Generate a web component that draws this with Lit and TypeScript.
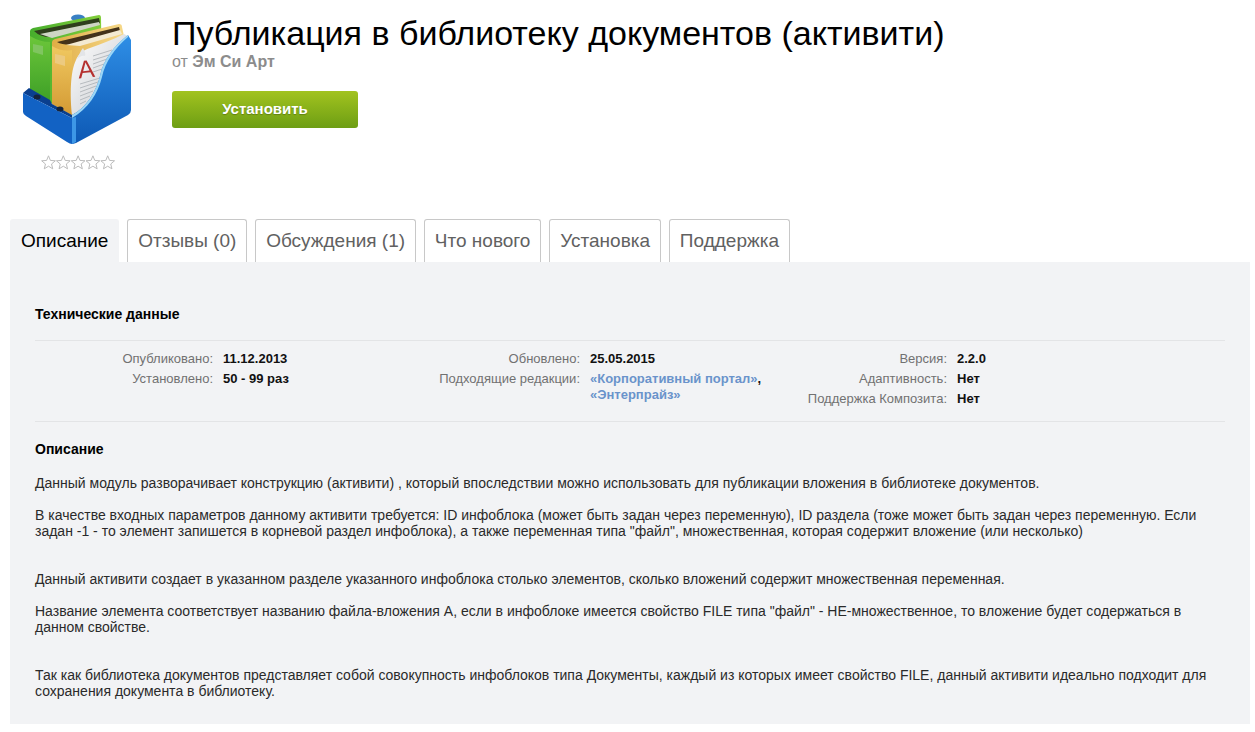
import { LitElement, html, css, svg } from "lit";
import { customElement } from "lit/decorators.js";

const TABS = ["Описание", "Отзывы (0)", "Обсуждения (1)", "Что нового", "Установка", "Поддержка"];

const starPoints = (x: number) => {
  const pts: string[] = [];
  for (let i = 0; i < 10; i++) {
    const r = i % 2 ? 3.2 : 7.2;
    const a = (Math.PI / 5) * i - Math.PI / 2;
    pts.push(`${(x + r * Math.cos(a)).toFixed(2)},${(8 + r * Math.sin(a)).toFixed(2)}`);
  }
  return pts.join(" ");
};

const boxIcon = html`<svg class="logo" width="130" height="150" viewBox="15 5 130 150">
  <defs>
    <linearGradient id="gr" x1="0" y1="0" x2="1" y2="0"><stop offset="0" stop-color="#46ad2c"/><stop offset="1" stop-color="#84cf3c"/></linearGradient>
    <linearGradient id="ye" x1="0" y1="0" x2="1" y2="0"><stop offset="0" stop-color="#e0ad45"/><stop offset="1" stop-color="#f6d98a"/></linearGradient>
    <linearGradient id="pg" x1="0" y1="0" x2="1" y2="1"><stop offset="0" stop-color="#ffffff"/><stop offset="1" stop-color="#c4c7cc"/></linearGradient>
    <linearGradient id="bl" x1="0" y1="0" x2="0" y2="1"><stop offset="0" stop-color="#2f8fe6"/><stop offset="1" stop-color="#0d58b4"/></linearGradient>
    <linearGradient id="sp" x1="0" y1="0" x2="0" y2="1"><stop offset="0" stop-color="#6cc63a"/><stop offset="1" stop-color="#3c9e26"/></linearGradient>
    <linearGradient id="ys" x1="0" y1="0" x2="0" y2="1"><stop offset="0" stop-color="#f0c860"/><stop offset="1" stop-color="#d39a34"/></linearGradient>
  </defs>
  <ellipse cx="78" cy="18" rx="7" ry="3.5" fill="#3a80c4"/>
  <path d="M30 31 Q30 29 33 28 L99 15 Q101 15 101 18 L102 80 L50 104 L30 92 Z" fill="url(#gr)"/>
  <path d="M34 31 L99 18 L100 23 L50 37 Q40 37 34 31 Z" fill="#2f3f1c"/>
  <path d="M40 34 L99 22 L100 25 L52 38 Z" fill="#cfd6c4"/>
  <path d="M30 36 Q40 42 50 42 L50 104 L30 92 Z" fill="url(#sp)"/>
  <path d="M33 44 L43 46 L43 55 L33 52 Z" fill="#80c560"/>
  <path d="M52 42 Q52 40 55 39 L119 24 Q122 24 122 27 L124 36 L124 90 L72 116 L52 104 Z" fill="url(#ye)"/>
  <path d="M57 42 L119 27 L120 31 L78 44 Q64 46 57 42 Z" fill="#43321a"/>
  <path d="M66 45 L120 30 L122 34 L80 46 Z" fill="#f3ead2"/>
  <path d="M52 46 Q62 52 72 50 L72 115 L52 104 Z" fill="url(#ys)"/>
  <path d="M55 54 L65 56 L65 66 L55 63 Z" fill="#ecca80"/>
  <path d="M72 115 C70 96 70 72 76 60 C79 53 84 50 90 48 C101 44 112 40 124 34 L128 36 L128 60 L100 100 Z" fill="url(#pg)"/>
  <path d="M76 60 C79 55 80 52 83 48 C85 52 86 54 85 56 C82 55 79 57 76 60 Z" fill="#e3e5e8"/>
  <text x="78" y="78" class="letter" transform="rotate(-6 84 70)">A</text>
  <g stroke="#a9aeb4" stroke-width="0.8">
    <path d="M93 56 L112 50"/><path d="M93 60 L109 55"/><path d="M93 64 L107 59"/><path d="M93 68 L104 64"/><path d="M93 72 L102 69"/><path d="M80 84 L100 78"/><path d="M80 88 L98 82"/><path d="M80 92 L96 86"/><path d="M80 96 L93 91"/><path d="M80 100 L90 96"/><path d="M80 104 L86 101"/>
  </g>
  <path d="M72 115 C86 108 96 92 100 76 C103 60 114 46 128 35 L131 40 L131 110 Q131 113 128 115 L76 143 Q73 144 72 144 Z" fill="url(#bl)"/>
  <path d="M72 115 C86 108 96 92 100 76 C103 60 114 46 128 35 L128 37 C115 48 105 62 102 77 C98 93 88 109 72 118 Z" fill="#9ad6f6"/>
  <path d="M23 93 L29 88 L50 100 L52 104 L72 115 L72 118 Z" fill="#0a3f8e"/>
  <path d="M23 93 L72 118 L72 144 Q70 144 67 142 L26 116 Q23 114 23 112 Z" fill="#1262c4"/>
  <path d="M72 118 L76 117 L76 142 L72 144 Z" fill="#3d97e6"/>
  <ellipse cx="37" cy="97" rx="3.5" ry="2.5" fill="#15233a"/>
  <ellipse cx="60" cy="109" rx="3.5" ry="2.5" fill="#15233a"/>
</svg>`;

@customElement("app-root")
export class AppRoot extends LitElement {
  static styles = css`
    :host {
      display: block;
      height: 732px;
      background: #fff;
      font-family: "Liberation Sans", Arial, sans-serif;
      overflow: hidden;
    }
    .head {
      display: flex;
      height: 219px;
    }
    .aside {
      width: 172px;
      flex: none;
      padding-top: 5px;
      box-sizing: border-box;
    }
    .logo {
      display: block;
      margin-left: 15px;
      filter: blur(0.35px);
    }
    .letter {
      font: 25px "Liberation Sans", sans-serif;
      fill: #b5302f;
    }
    .stars {
      display: block;
      margin-left: 40px;
    }
    h1 {
      margin: 13px 0 0;
      font-size: 34px;
      font-weight: 400;
      line-height: 40px;
      color: #000;
    }
    .by {
      font-size: 16px;
      line-height: 18px;
      color: #8c8c8c;
    }
    .install {
      width: 186px;
      height: 37px;
      margin-top: 20px;
      border-radius: 3px;
      background: linear-gradient(#a2c31f, #6d9e14);
      color: #fff;
      font-size: 15px;
      font-weight: 700;
      line-height: 35px;
      text-align: center;
      text-shadow: 0 1px 1px rgba(0, 0, 0, 0.25);
    }
    .tabs {
      display: flex;
      gap: 7.8px;
      margin-left: 10px;
      height: 43px;
    }
    .tab {
      box-sizing: border-box;
      height: 43px;
      padding: 10px 10px 0;
      border: 1px solid #c8c8c8;
      border-bottom: 0;
      border-radius: 3px 3px 0 0;
      font-size: 19px;
      line-height: 22px;
      color: #616161;
    }
    .tab.active {
      border-color: #f2f3f5;
      background: #f2f3f5;
      color: #000;
    }
    .panel {
      height: 462px;
      width: 1240px;
      box-sizing: border-box;
      margin-left: 10px;
      padding: 44px 25px 0;
      background: #f2f3f5;
      font-size: 14px;
    }
    h2 {
      margin: 0;
      font-size: 14px;
      line-height: 16px;
      color: #000;
    }
    .specs {
      display: grid;
      grid-template-columns: 367px 367px 1fr;
      height: 82px;
      box-sizing: border-box;
      margin-top: 18px;
      padding-top: 10px;
      border-top: 1px solid #e3e4e6;
      border-bottom: 1px solid #e3e4e6;
      font-size: 13px;
    }
    .col {
      display: grid;
      grid-template-columns: 178px 1fr;
      column-gap: 10px;
      row-gap: 4px;
      align-content: start;
      line-height: 16px;
    }
    .k {
      text-align: right;
      color: #717171;
    }
    .v {
      font-weight: 700;
      color: #111;
    }
    .v a {
      color: #6a93cb;
    }
    .desc {
      margin-top: 19px;
    }
    .body {
      margin-top: 18px;
      line-height: 16px;
      color: #2a2a2a;
    }
  `;

  private spec(k: string, v: unknown) {
    return html`<div class="k">${k}</div><div class="v">${v}</div>`;
  }

  render() {
    return html`
      <div class="head">
        <div class="aside">
          ${boxIcon}
          <svg class="stars" width="76" height="16" viewBox="0 0 76 16">
            ${[8.5, 23.3, 38.1, 52.9, 67.7].map(
              (x) => svg`<polygon points=${starPoints(x)} fill="#fff" stroke="#bcbcbc" stroke-width="1"/>`
            )}
          </svg>
        </div>
        <div>
          <h1>Публикация в библиотеку документов (активити)</h1>
          <div class="by">от <b>Эм Си Арт</b></div>
          <div class="install">Установить</div>
        </div>
      </div>
      <div class="tabs">
        ${TABS.map((t, i) => html`<div class="tab ${i === 0 ? "active" : ""}">${t}</div>`)}
      </div>
      <div class="panel">
        <h2>Технические данные</h2>
        <div class="specs">
          <div class="col">
            ${this.spec("Опубликовано:", "11.12.2013")}
            ${this.spec("Установлено:", "50 - 99 раз")}
          </div>
          <div class="col">
            ${this.spec("Обновлено:", "25.05.2015")}
            ${this.spec("Подходящие редакции:", html`<a>«Корпоративный портал»</a>,<br /><a>«Энтерпрайз»</a>`)}
          </div>
          <div class="col">
            ${this.spec("Версия:", "2.2.0")}
            ${this.spec("Адаптивность:", "Нет")}
            ${this.spec("Поддержка Композита:", "Нет")}
          </div>
        </div>
        <h2 class="desc">Описание</h2>
        <div class="body">
          Данный модуль разворачивает конструкцию (активити) , который впоследствии можно использовать для публикации вложения в библиотеке документов.<br /><br />
          В качестве входных параметров данному активити требуется: ID инфоблока (может быть задан через переменную), ID раздела (тоже может быть задан через переменную. Если задан -1 - то элемент запишется в корневой раздел инфоблока), а также переменная типа "файл", множественная, которая содержит вложение (или несколько)<br /><br /><br />
          Данный активити создает в указанном разделе указанного инфоблока столько элементов, сколько вложений содержит множественная переменная.<br /><br />
          Название элемента соответствует названию файла-вложения А, если в инфоблоке имеется свойство FILE типа "файл" - НЕ-множественное, то вложение будет содержаться в данном свойстве.<br /><br /><br />
          Так как библиотека документов представляет собой совокупность инфоблоков типа Документы, каждый из которых имеет свойство FILE, данный активити идеально подходит для сохранения документа в библиотеку.
        </div>
      </div>
    `;
  }
}
